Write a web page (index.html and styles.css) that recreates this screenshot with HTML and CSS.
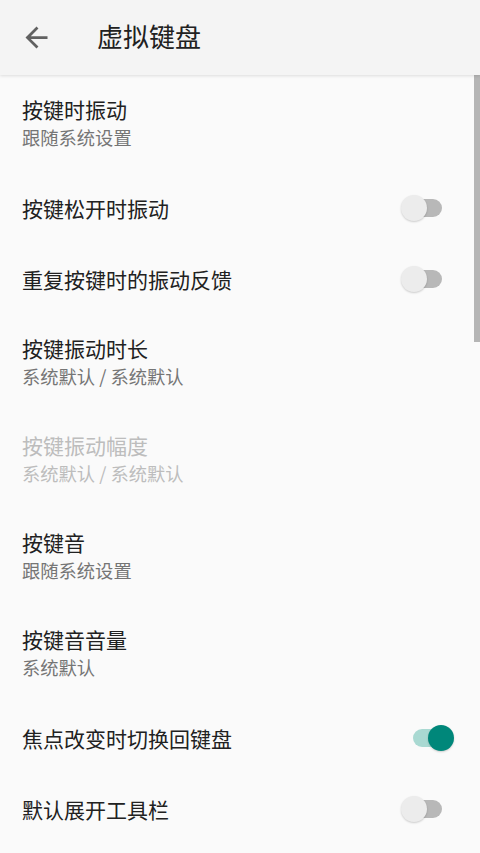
FILE: index.html
```html
<!DOCTYPE html>
<html lang="zh-CN">
<head>
<meta charset="utf-8">
<title>虚拟键盘</title>
<link rel="stylesheet" href="styles.css">
</head>
<body>
<header class="appbar">
  <span class="back">
    <svg viewBox="0 0 24 24"><path d="M20 11H7.83l5.59-5.59L12 4l-8 8 8 8 1.41-1.41L7.83 13H20v-2z" fill="#616161"/></svg>
  </span>
  <h1 class="title">虚拟键盘</h1>
</header>
<main class="list">
  <div class="row two">
    <div class="text"><div class="t">按键时振动</div><div class="s">跟随系统设置</div></div>
  </div>
  <div class="row one">
    <div class="text"><div class="t">按键松开时振动</div></div>
    <span class="switch"><span class="track"></span><span class="thumb"></span></span>
  </div>
  <div class="row one">
    <div class="text"><div class="t">重复按键时的振动反馈</div></div>
    <span class="switch"><span class="track"></span><span class="thumb"></span></span>
  </div>
  <div class="row two">
    <div class="text"><div class="t">按键振动时长</div><div class="s">系统默认 / 系统默认</div></div>
  </div>
  <div class="row two disabled">
    <div class="text"><div class="t">按键振动幅度</div><div class="s">系统默认 / 系统默认</div></div>
  </div>
  <div class="row two">
    <div class="text"><div class="t">按键音</div><div class="s">跟随系统设置</div></div>
  </div>
  <div class="row two">
    <div class="text"><div class="t">按键音音量</div><div class="s">系统默认</div></div>
  </div>
  <div class="row one">
    <div class="text"><div class="t">焦点改变时切换回键盘</div></div>
    <span class="switch on"><span class="track"></span><span class="thumb"></span></span>
  </div>
  <div class="row one">
    <div class="text"><div class="t">默认展开工具栏</div></div>
    <span class="switch"><span class="track"></span><span class="thumb"></span></span>
  </div>
</main>
<div class="scrollbar"></div>
</body>
</html>
```
FILE: styles.css
```css
html, body {
  margin: 0;
  padding: 0;
  background: #fafafa;
  font-family: "Noto Sans CJK SC", "Noto Sans", sans-serif;
  overflow: hidden;
  height: 853px;
}
.appbar {
  height: 75px;
  background: #f4f4f4;
  display: flex;
  align-items: center;
  box-shadow: 0 1px 3px rgba(0,0,0,0.12);
  position: relative;
  z-index: 2;
}
.back {
  width: 33px;
  height: 33px;
  margin-left: 20px;
  display: flex;
}
.back svg { width: 33px; height: 33px; }
.title {
  margin: 0 0 4px 44px;
  font-size: 26px;
  font-weight: 400;
  color: #212121;
  line-height: 34px;
}
.list { padding-top: 0; }
.row {
  display: flex;
  align-items: center;
  padding-left: 22px;
  box-sizing: border-box;
}
.row.two { height: 97px; padding-bottom: 2px; }
.row.one { height: 71px; }
.text { flex: 1; }
.t {
  font-size: 21px;
  line-height: 28px;
  color: #212121;
}
.s {
  font-size: 18.3px;
  line-height: 28px;
  color: #757575;
}
.disabled .t, .disabled .s { color: #bdbdbd; }
.switch {
  position: relative;
  width: 38px;
  height: 26px;
  margin-right: 38px;
}
.switch .track {
  position: absolute;
  left: 0;
  right: 0;
  top: 4px;
  height: 18px;
  border-radius: 9px;
  background: #b8b8b8;
}
.switch .thumb {
  position: absolute;
  left: -3px;
  top: 0;
  width: 26px;
  height: 26px;
  border-radius: 50%;
  background: #ececec;
  box-shadow: 0 1px 2px rgba(0,0,0,0.18);
}
.switch.on { margin-right: 29px; }
.switch.on .track { background: #a9d9d2; }
.switch.on .thumb {
  left: auto;
  right: -3px;
  background: #00877a;
}
.scrollbar {
  position: absolute;
  right: 0;
  top: 75px;
  width: 6px;
  height: 267px;
  background: #b5b5b5;
}
```
